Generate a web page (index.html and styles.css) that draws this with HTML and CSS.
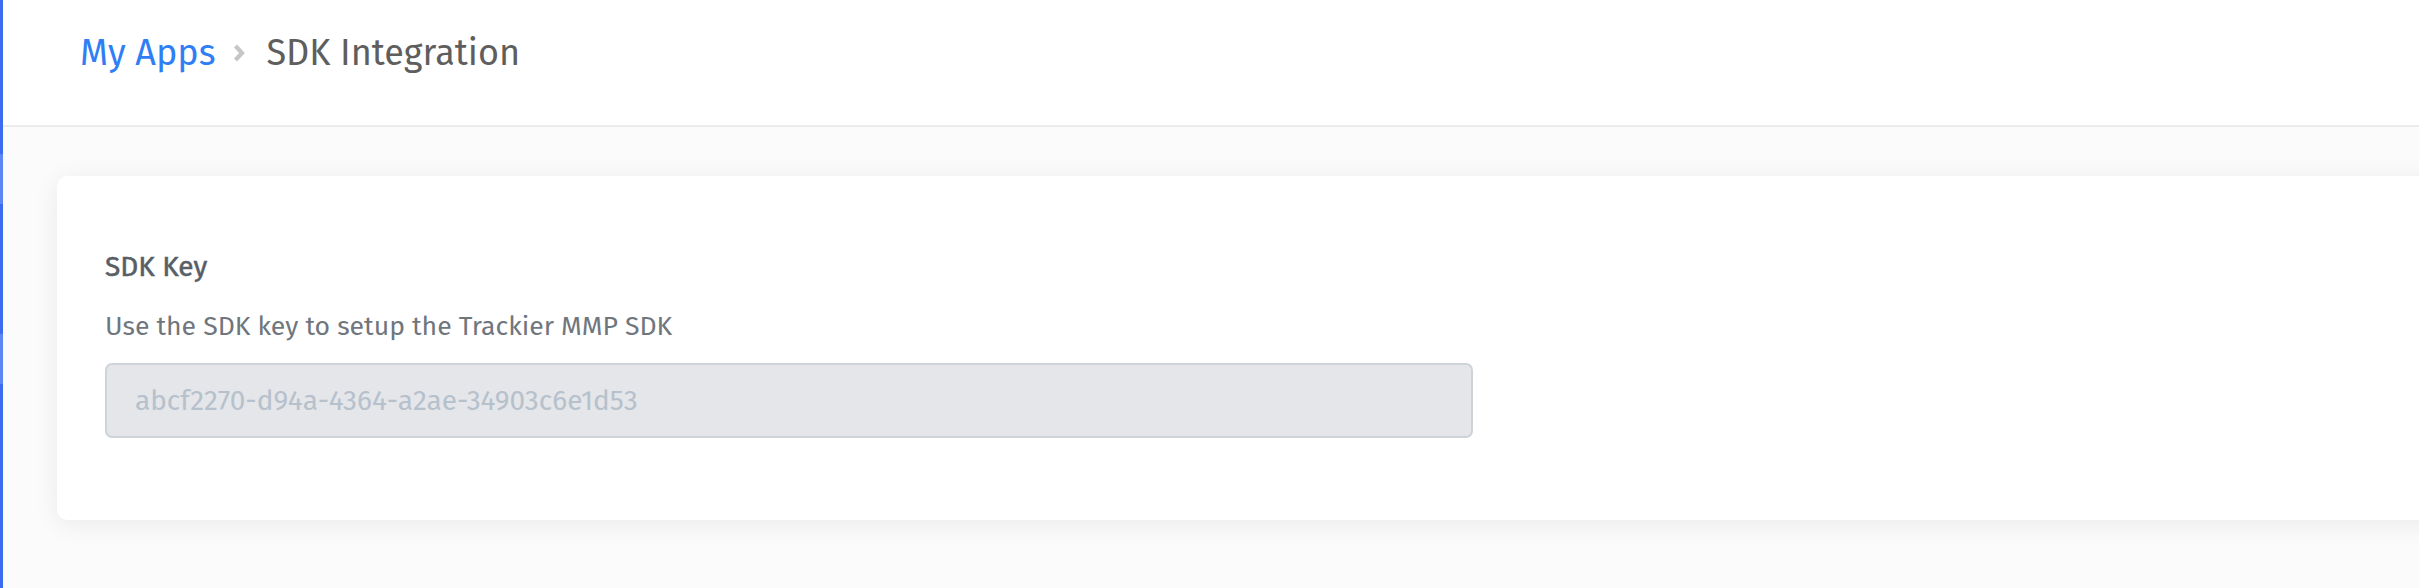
FILE: index.html
```html
<!DOCTYPE html>
<html lang="en">
<head>
<meta charset="utf-8">
<title>SDK Integration</title>
<link rel="stylesheet" href="styles.css">
</head>
<body>
<div class="app">
  <aside class="rail">
    <span class="rail-item"></span>
    <span class="rail-item"></span>
  </aside>
  <div class="main">
    <header class="topbar">
      <nav class="crumbs">
        <a class="crumb-link" href="#">My Apps</a>
        <svg class="crumb-sep" width="12" height="18" viewBox="0 0 12 18" aria-hidden="true"><polyline points="2.5,2 9,9 2.5,16" fill="none" stroke="#c6c6c6" stroke-width="4.2" stroke-linejoin="miter"/></svg>
        <span class="crumb-current">SDK Integration</span>
      </nav>
    </header>
    <section class="content">
      <div class="card">
        <h3 class="field-label">SDK Key</h3>
        <p class="field-help">Use the SDK key to setup the Trackier MMP SDK</p>
        <input class="field-input" type="text" value="abcf2270-d94a-4364-a2ae-34903c6e1d53" disabled>
      </div>
    </section>
  </div>
</div>
</body>
</html>
```
FILE: styles.css
```css
html, body {
  margin: 0;
  padding: 0;
  height: 100%;
}
body {
  font-family: "Fira Sans", "Open Sans", "Noto Sans", sans-serif;
  background: #fbfbfb;
  overflow: hidden;
}
.app {
  display: flex;
  height: 588px;
}
.rail {
  width: 3px;
  flex: none;
  background: #3b6cf0;
  display: flex;
  flex-direction: column;
  padding-top: 154px;
  gap: 130px;
}
.rail-item {
  display: block;
  height: 50px;
  background: #5b86f3;
}
.main {
  flex: 1;
  display: flex;
  flex-direction: column;
  min-width: 0;
  overflow: hidden;
}
.topbar {
  height: 127px;
  box-sizing: border-box;
  background: #ffffff;
  border-bottom: 2px solid #ececec;
  padding: 28px 0 0 77px;
  flex: none;
}
.crumbs {
  display: flex;
  align-items: center;
  height: 50px;
}
.crumb-link {
  color: #2f7ef5;
  text-decoration: none;
  font-size: 36px;
}
.crumb-sep {
  margin: 0 21px 0 18px;
}
.crumb-current {
  color: #5e5e5e;
  font-size: 36px;
}
.content {
  padding: 49px 0 0 54px;
}
.card {
  background: #ffffff;
  border-radius: 10px;
  box-shadow: 0 4px 26px rgba(0, 0, 0, 0.07);
  margin-right: -40px;
  height: 344px;
  box-sizing: border-box;
  padding: 73px 48px 0 48px;
}
.field-label {
  margin: 0;
  font-size: 28px;
  line-height: 36px;
  font-weight: 400;
  color: #575e66;
  -webkit-text-stroke: 0.5px #575e66;
}
.field-help {
  margin: 23px 0 0 0;
  font-size: 26.6px;
  line-height: 36px;
  color: #6f767d;
}
.field-input {
  display: block;
  margin-top: 19px;
  width: 1368px;
  height: 75px;
  box-sizing: border-box;
  border: 2px solid #ced3d8;
  border-radius: 7px;
  background: #e4e6ea;
  padding: 0 28px;
  font-family: inherit;
  font-size: 28px;
  color: #b6c1cc;
  -webkit-text-fill-color: #b6c1cc;
  opacity: 1;
}
```
